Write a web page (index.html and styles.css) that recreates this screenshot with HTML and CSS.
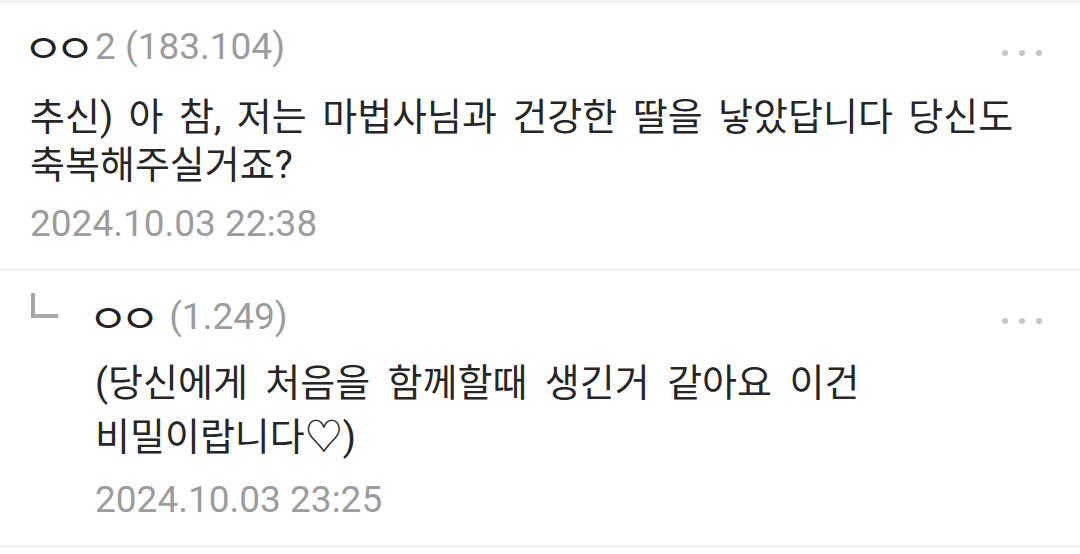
FILE: index.html
```html
<!DOCTYPE html>
<html lang="ko">

<head>
    <meta charset="UTF-8">
    <meta name="viewport" content="width=device-width, initial-scale=1.0">
    <title>댓글</title>
    <link rel="stylesheet" href="styles.css">
</head>

<body>
    <div class="list">
        <div class="comment">
            <div class="head">
                <span class="nick"><span>ㅇㅇ</span></span><span class="ip">2 (183.104)</span>
                <span class="more"><i></i><i></i><i></i></span>
            </div>
            <p class="text">추신) 아 참, 저는 마법사님과 건강한 딸을 낳았답니다 당신도<br>축복해주실거죠?</p>
            <div class="date">2024.10.03 22:38</div>
        </div>

        <div class="comment reply">
            <div class="mark">
                <svg width="27" height="26" viewBox="0 0 27 26">
                    <path d="M2 0 V23 H27" fill="none" stroke="#a8a8a8" stroke-width="4"/>
                </svg>
            </div>
            <div class="body">
                <div class="head">
                    <span class="nick"><span>ㅇㅇ</span></span><span class="ip">&nbsp;(1.249)</span>
                    <span class="more"><i></i><i></i><i></i></span>
                </div>
                <p class="text">(당신에게 처음을 함께할때 생긴거 같아요 이건<br>비밀이랍니다♡)</p>
                <div class="date">2024.10.03 23:25</div>
            </div>
        </div>
    </div>
</body>

</html>
```

FILE: styles.css
```css
:root {
    --col-text: #262626;
    --col-gray: #9c9c9c;
    --col-dots: #c6c6c6;
    --col-line: #f2f2f2;
    --font-main: Roboto, "Noto Sans CJK KR", sans-serif;
}

body {
    margin: 0;
    background: #fff;
    font-family: var(--font-main);
    color: var(--col-text);
}

.list {
    border-top: 3px solid var(--col-line);
}

.comment {
    padding: 19px 38px 20px 30px;
    border-bottom: 3px solid var(--col-line);
}

.head {
    display: flex;
    align-items: center;
    height: 48px;
    font-size: 37px;
}

/* the two jamo circles are wide and flat in the original */
.nick {
    display: inline-block;
    flex: none;
    width: 65px;
    height: 48px;
    color: #222;
    font-family: "Noto Sans CJK KR", sans-serif;
    font-size: 40px;
    line-height: 48px;
}

.nick span {
    display: inline-block;
    white-space: nowrap;
    letter-spacing: -8px;
    transform: translateX(-7px) scaleX(1.1);
    transform-origin: left center;
}

.ip {
    color: var(--col-gray);
}

.more {
    margin-left: auto;
    margin-top: 14px;
    display: flex;
    gap: 11px;
}

.more i {
    display: block;
    width: 6px;
    height: 6px;
    border-radius: 50%;
    background: var(--col-dots);
}

.text {
    margin: 23px 0 0;
    font-size: 38px;
    line-height: 48px;
    word-spacing: 6px;
}

.date {
    margin-top: 11px;
    height: 48px;
    line-height: 48px;
    font-size: 37px;
    color: var(--col-gray);
}

.reply {
    display: flex;
    padding: 21px 38px 21px 31px;
}

.reply .mark {
    width: 64px;
    flex: none;
    padding-top: 1px;
}

.reply .body {
    flex: 1;
}

.reply .more {
    margin-top: 10px;
}

.reply .text {
    margin-top: 16px;
    line-height: 54px;
    word-spacing: 8px;
}

.reply .date {
    margin-top: 12px;
}
```
